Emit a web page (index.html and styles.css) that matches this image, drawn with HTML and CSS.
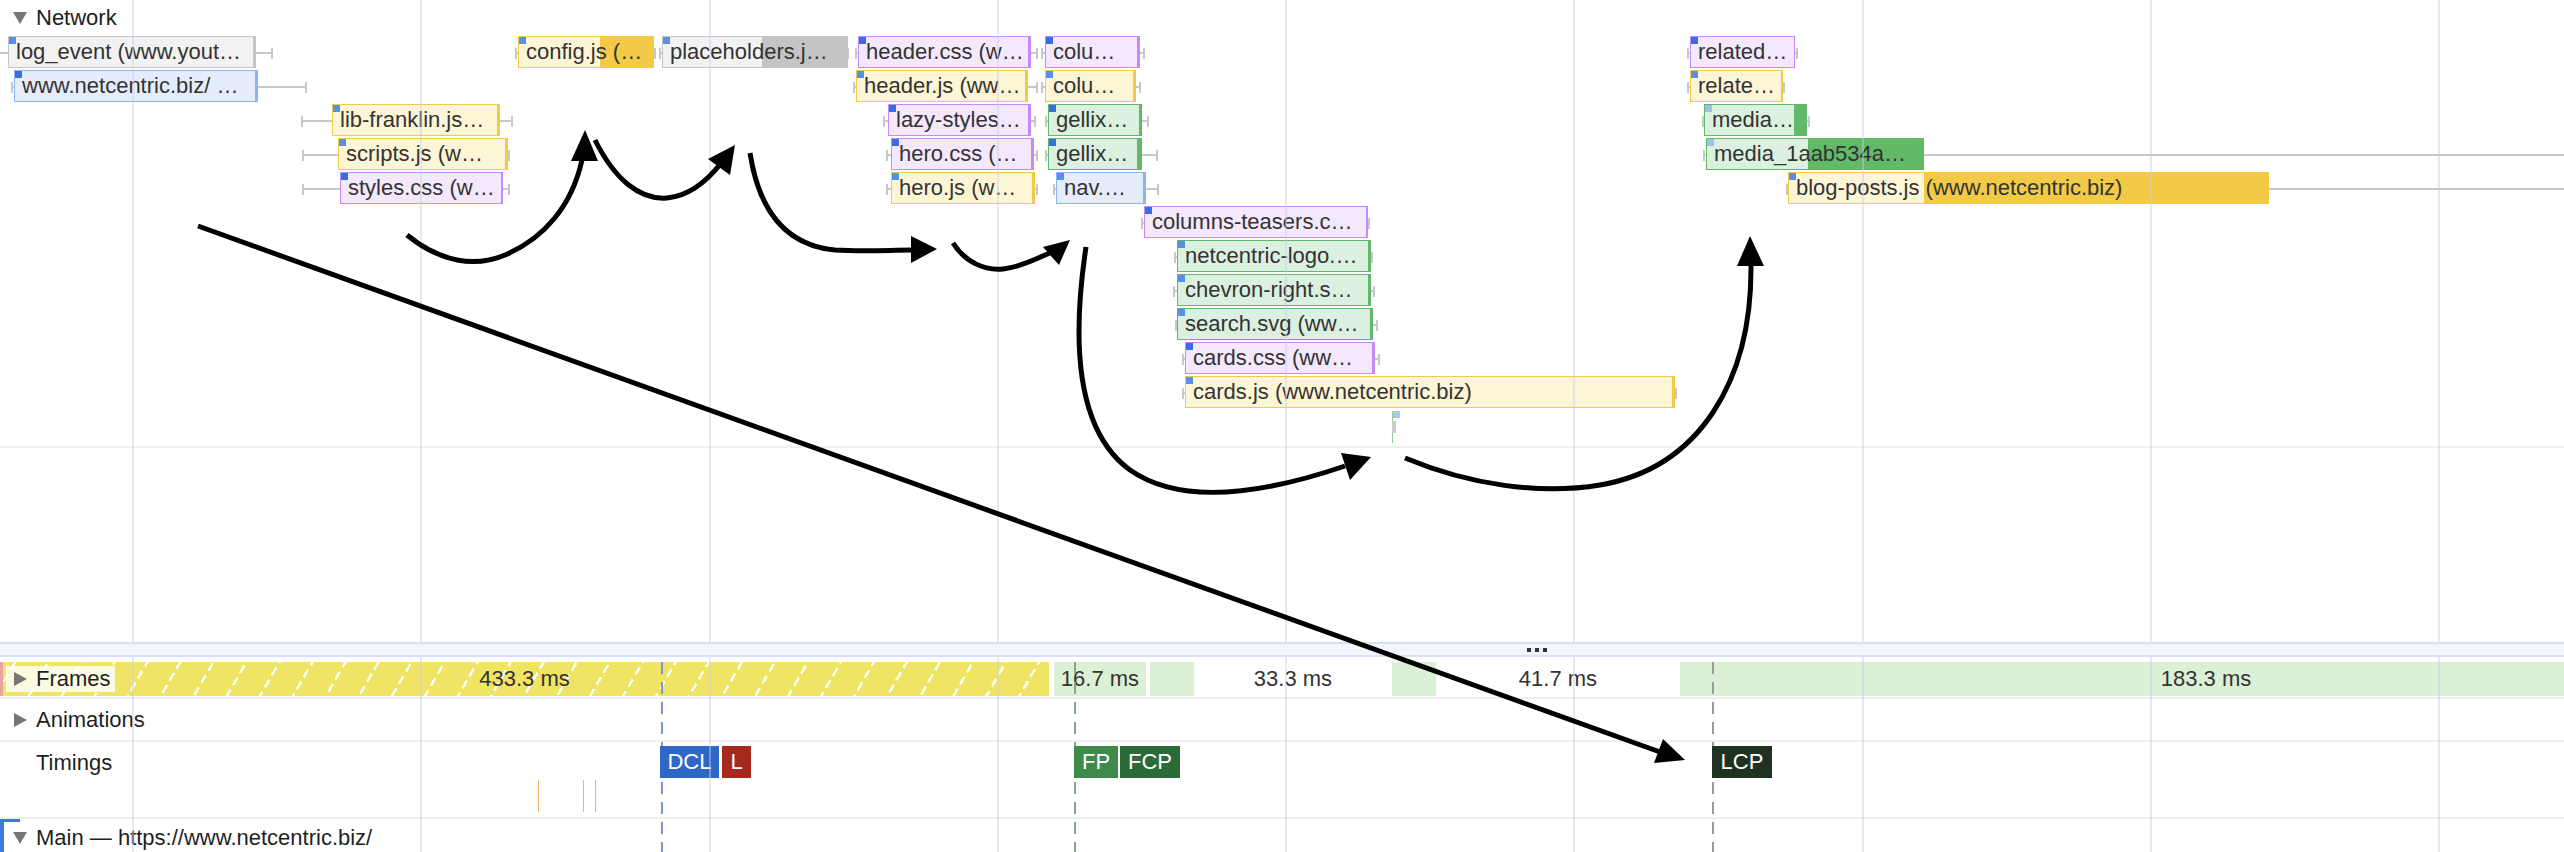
FILE: index.html
```html
<!DOCTYPE html>
<html lang="en">
<head>
<meta charset="utf-8">
<title>Performance – Network</title>
<link rel="stylesheet" href="styles.css">
</head>
<body>
<div class="panel">
  <div class="upper">
    <section class="network">
      <div class="net-header">
        <svg class="tri" width="14" height="12" viewBox="0 0 14 12"><polygon points="0,0 14,0 7,12"/></svg>
        <span>Network</span>
      </div>
      <div class="rows">
        <div class="row">
          <div class="wh nl" style="left:0px;width:273px"></div>
          <div class="bar g pr2" style="left:8px;width:248px;--dl:3px"><span class="t">log_event (www.yout…</span></div>
          <div class="wh" style="left:515px;width:141px"></div>
          <div class="bar y pr2" style="left:518px;width:136px;--dl:54px"><span class="t">config.js (…</span></div>
          <div class="wh" style="left:659px;width:190px"></div>
          <div class="bar g pr2" style="left:662px;width:186px;--dl:86px"><span class="t">placeholders.j…</span></div>
          <div class="wh" style="left:855px;width:183px"></div>
          <div class="bar p pr1" style="left:858px;width:173px;--dl:3px"><span class="t">header.css (w…</span></div>
          <div class="wh" style="left:1041px;width:104px"></div>
          <div class="bar p pr1" style="left:1045px;width:95px;--dl:3px"><span class="t">colu…</span></div>
          <div class="wh" style="left:1687px;width:111px"></div>
          <div class="bar p pr1" style="left:1690px;width:105px;--dl:1px"><span class="t">related…</span></div>
        </div>
        <div class="row">
          <div class="wh" style="left:11px;width:296px"></div>
          <div class="bar b pr1" style="left:14px;width:244px;--dl:3px"><span class="t">www.netcentric.biz/ …</span></div>
          <div class="wh" style="left:853px;width:185px"></div>
          <div class="bar y pr2" style="left:856px;width:172px;--dl:3px"><span class="t">header.js (ww…</span></div>
          <div class="wh" style="left:1041px;width:100px"></div>
          <div class="bar y pr2" style="left:1045px;width:91px;--dl:3px"><span class="t">colu…</span></div>
          <div class="wh" style="left:1687px;width:98px"></div>
          <div class="bar y pr2" style="left:1690px;width:93px;--dl:2px"><span class="t">relate…</span></div>
        </div>
        <div class="row">
          <div class="wh" style="left:301px;width:212px"></div>
          <div class="bar y pr2" style="left:332px;width:168px;--dl:3px"><span class="t">lib-franklin.js…</span></div>
          <div class="wh" style="left:883px;width:153px"></div>
          <div class="bar p pr1" style="left:888px;width:143px;--dl:3px"><span class="t">lazy-styles…</span></div>
          <div class="wh" style="left:1045px;width:104px"></div>
          <div class="bar n pr1" style="left:1048px;width:94px;--dl:3px"><span class="t">gellix…</span></div>
          <div class="wh" style="left:1702px;width:108px"></div>
          <div class="bar n pr3" style="left:1704px;width:103px;--dl:13px"><span class="t">media…</span></div>
        </div>
        <div class="row">
          <div class="wh" style="left:302px;width:208px"></div>
          <div class="bar y pr2" style="left:338px;width:170px;--dl:3px"><span class="t">scripts.js (w…</span></div>
          <div class="wh" style="left:886px;width:152px"></div>
          <div class="bar p pr1" style="left:891px;width:143px;--dl:3px"><span class="t">hero.css (…</span></div>
          <div class="wh" style="left:1045px;width:113px"></div>
          <div class="bar n pr1" style="left:1048px;width:94px;--dl:5px"><span class="t">gellix…</span></div>
          <div class="wh nr" style="left:1703px;width:861px"></div>
          <div class="bar n pr3" style="left:1706px;width:218px;--dl:116px"><span class="t">media_1aab534a…</span></div>
        </div>
        <div class="row">
          <div class="wh" style="left:302px;width:208px"></div>
          <div class="bar p pr1" style="left:340px;width:163px;--dl:2px"><span class="t">styles.css (w…</span></div>
          <div class="wh" style="left:886px;width:152px"></div>
          <div class="bar y pr2" style="left:891px;width:144px;--dl:3px"><span class="t">hero.js (w…</span></div>
          <div class="wh" style="left:1053px;width:106px"></div>
          <div class="bar b pr2" style="left:1056px;width:90px;--dl:3px"><span class="t">nav.…</span></div>
          <div class="wh nr" style="left:1786px;width:778px"></div>
          <div class="bar y pr2" style="left:1788px;width:481px;--dl:345px"><span class="t">blog-posts.js (www.netcentric.biz)</span></div>
        </div>
        <div class="row">
          <div class="wh" style="left:1141px;width:229px"></div>
          <div class="bar p pr1" style="left:1144px;width:224px;--dl:2px"><span class="t">columns-teasers.c…</span></div>
        </div>
        <div class="row">
          <div class="wh" style="left:1174px;width:199px"></div>
          <div class="bar n pr2" style="left:1177px;width:194px;--dl:3px"><span class="t">netcentric-logo.…</span></div>
        </div>
        <div class="row">
          <div class="wh" style="left:1173px;width:202px"></div>
          <div class="bar n pr2" style="left:1177px;width:194px;--dl:3px"><span class="t">chevron-right.s…</span></div>
        </div>
        <div class="row">
          <div class="wh" style="left:1175px;width:203px"></div>
          <div class="bar n pr2" style="left:1177px;width:196px;--dl:3px"><span class="t">search.svg (ww…</span></div>
        </div>
        <div class="row">
          <div class="wh" style="left:1182px;width:198px"></div>
          <div class="bar p pr1" style="left:1185px;width:190px;--dl:3px"><span class="t">cards.css (ww…</span></div>
        </div>
        <div class="row">
          <div class="wh" style="left:1182px;width:495px"></div>
          <div class="bar y pr2" style="left:1185px;width:490px;--dl:3px"><span class="t">cards.js (www.netcentric.biz)</span></div>
        </div>
        <div class="row">
          <div class="tiny-line" style="left:1392px"></div>
          <div class="tiny-sq" style="left:1393px"></div>
          <div class="tiny-bar" style="left:1392px"></div>
        </div>
      </div>
    </section>
    <div class="blank"></div>
  </div>

  <div class="resizer"><span class="dot"></span><span class="dot"></span><span class="dot"></span></div>

  <section class="tracks">
    <div class="track frames">
      <div class="frame-edge"></div>
      <div class="frame partial" style="left:0px;width:1049px">433.3 ms</div>
      <div class="frame ok" style="left:1054px;width:92px">16.7 ms</div>
      <div class="frame ok" style="left:1150px;width:44px"></div>
      <div class="frame idle" style="left:1194px;width:198px">33.3 ms</div>
      <div class="frame ok" style="left:1392px;width:44px"></div>
      <div class="frame idle" style="left:1436px;width:244px">41.7 ms</div>
      <div class="frame ok" style="left:1680px;width:1052px">183.3 ms</div>
      <div class="frames-label">
        <svg class="tri" width="13" height="14" viewBox="0 0 13 14"><polygon points="0,0 13,7 0,14"/></svg>
        <span>Frames</span>
      </div>
    </div>
    <div class="track animations">
      <svg class="tri" width="13" height="14" viewBox="0 0 13 14"><polygon points="0,0 13,7 0,14"/></svg>
      <span>Animations</span>
    </div>
    <div class="track timings">
      <div class="timings-label">Timings</div>
      <div class="tick" style="left:538px"></div>
      <div class="tick" style="left:583px"></div>
      <div class="tick" style="left:595px"></div>
      <div class="marker dcl" style="left:660px;width:59px">DCL</div>
      <div class="marker load" style="left:722px;width:29px">L</div>
      <div class="marker fp" style="left:1074px;width:44px">FP</div>
      <div class="marker fcp" style="left:1120px;width:60px">FCP</div>
      <div class="marker lcp" style="left:1712px;width:60px">LCP</div>
    </div>
    <div class="track main">
      <div class="main-label">
        <svg class="tri" width="14" height="12" viewBox="0 0 14 12"><polygon points="0,0 14,0 7,12"/></svg>
        <span>Main — https://www.netcentric.biz/</span>
      </div>
    </div>
    <div class="vline dcl-line" style="left:661px"></div>
    <div class="vline fp-line" style="left:1074px"></div>
    <div class="vline lcp-line" style="left:1712px"></div>
  </section>

  <svg class="ink" width="2564" height="852" viewBox="0 0 2564 852">
    <g fill="none" stroke="#000" stroke-width="5">
      <path d="M407,235 C440,262 475,268 505,255 C545,238 572,205 582,160"/>
      <path d="M595,140 C615,180 640,200 667,198 C690,196 708,180 722,162"/>
      <path d="M750,153 C758,205 782,245 835,250 C865,252 890,250 912,250"/>
      <path d="M953,243 C965,262 985,271 1003,269 C1022,267 1037,258 1050,253"/>
      <path d="M1086,247 C1072,340 1075,430 1130,470 C1180,505 1260,495 1345,466"/>
      <path d="M1405,458 C1470,485 1540,495 1600,485 C1700,468 1752,380 1751,265"/>
      <path d="M198,226 L1660,752"/>
    </g>
    <g fill="#000">
      <polygon points="585,130 571,161 598,161"/>
      <polygon points="735,145 708,159 730,175"/>
      <polygon points="937,249 911,236 911,263"/>
      <polygon points="1070,240 1043,247 1059,265"/>
      <polygon points="1371,457 1341,453 1350,480"/>
      <polygon points="1750,236 1737,266 1764,266"/>
      <polygon points="1685,760 1654,763 1663,739"/>
    </g>
  </svg>
</div>
</body>
</html>
```

FILE: styles.css
```css
* {
  box-sizing: border-box;
  margin: 0;
  padding: 0;
}

html, body {
  background: #ffffff;
}

body {
  margin: 0;
  font-family: "Liberation Sans", Arial, Helvetica, sans-serif;
  font-size: 22px;
  color: #222222;
}

.panel {
  position: relative;
  width: 2564px;
  height: 852px;
  overflow: hidden;
  display: flex;
  flex-direction: column;
}

/* ---------- grid lines ---------- */
.upper,
.tracks {
  position: relative;
}

.upper::after,
.tracks::after {
  content: "";
  position: absolute;
  inset: 0;
  pointer-events: none;
  z-index: 4;
  background: repeating-linear-gradient(90deg, rgba(196, 206, 240, 0.45) 0 2px, transparent 2px 288.3px) 132px 0;
}

/* ---------- network ---------- */
.upper {
  height: 642px;
  flex: none;
  display: flex;
  flex-direction: column;
}

.network {
  height: 448px;
  flex: none;
  border-bottom: 2px solid #efefef;
  display: flex;
  flex-direction: column;
}

.net-header {
  height: 36px;
  flex: none;
  display: flex;
  align-items: center;
  gap: 9px;
  padding-left: 13px;
  color: #202020;
}

.tri polygon {
  fill: #767676;
}

.rows {
  display: flex;
  flex-direction: column;
}

.row {
  position: relative;
  height: 34px;
  flex: none;
}

.bar {
  position: absolute;
  top: 0;
  height: 32px;
  border: 1px solid;
  padding-left: 7px;
  line-height: 30px;
  white-space: nowrap;
  overflow: hidden;
  color: #333333;
  z-index: 1;
}

.bar::after {
  content: "";
  position: absolute;
  top: -1px;
  bottom: -1px;
  right: -1px;
  width: var(--dl);
}

.bar::before {
  content: "";
  position: absolute;
  left: 0;
  top: 0;
  width: 7px;
  height: 7px;
  z-index: 3;
}

.bar .t {
  position: relative;
  z-index: 2;
}

.bar.g { background: #f2f2f2; border-color: #c6c6c6; }
.bar.g::after { background: #c4c4c4; }
.bar.b { background: #e5edfc; border-color: #8ab4f8; }
.bar.b::after { background: #8ab4f8; }
.bar.y { background: #fdf6d6; border-color: #f2c94c; }
.bar.y::after { background: #f3ca47; }
.bar.p { background: #f4e8fd; border-color: #c58af9; }
.bar.p::after { background: #c58af9; }
.bar.n { background: #dcf0df; border-color: #5fb96b; }
.bar.n::after { background: #62b967; }

.bar.pr1::before { background: #3a6ee0; }
.bar.pr2::before { background: #5b8ee6; }
.bar.pr3::before { background: #9fc0e6; }

.wh {
  position: absolute;
  top: 16px;
  height: 2px;
  background: #c8c8c8;
}

.wh::before,
.wh::after {
  content: "";
  position: absolute;
  top: -4px;
  width: 2px;
  height: 11px;
  background: #c8c8c8;
}

.wh::before { left: 0; }
.wh::after { right: 0; }
.wh.nl::before { display: none; }
.wh.nr::after { display: none; }

.tiny-line {
  position: absolute;
  top: 1px;
  width: 1px;
  height: 32px;
  background: #8fcf94;
}

.tiny-sq {
  position: absolute;
  top: 1px;
  width: 7px;
  height: 7px;
  background: #adc8f0;
}

.tiny-bar {
  position: absolute;
  top: 11px;
  width: 4px;
  height: 12px;
  background: #cccccc;
}

.blank {
  flex: 1;
}

/* ---------- resizer ---------- */
.resizer {
  height: 15px;
  flex: none;
  background: #f3f5fb;
  border-top: 2px solid #d8e2f6;
  border-bottom: 2px solid #d8e2f6;
  display: flex;
  align-items: center;
  gap: 4px;
  padding-left: 1527px;
}

.dot {
  width: 4px;
  height: 4px;
  background: #333333;
}

/* ---------- tracks ---------- */
.tracks {
  flex: 1;
  display: flex;
  flex-direction: column;
}

.track {
  position: relative;
  flex: none;
  border-bottom: 2px solid #eeeeee;
}

.frames {
  height: 42px;
}

.frame {
  position: absolute;
  top: 5px;
  height: 34px;
  display: flex;
  align-items: center;
  justify-content: center;
  white-space: nowrap;
  color: #333333;
}

.frame.partial {
  background-color: #efe463;
  background-image:
    repeating-linear-gradient(30deg, transparent 0 9px, #efe463 9px 14px),
    repeating-linear-gradient(120deg, transparent 0 12px, rgba(255, 255, 255, 0.92) 12px 14.5px, transparent 14.5px 28.6px);
}

.frame.ok {
  background: #dbf0d5;
}

.frame.idle {
  background: transparent;
}

.frame-edge {
  position: absolute;
  left: 0;
  top: 5px;
  width: 3px;
  height: 34px;
  background: #e8a3a0;
  z-index: 1;
}

.frames-label {
  position: absolute;
  left: 6px;
  top: 9px;
  height: 26px;
  width: 109px;
  padding-left: 8px;
  display: flex;
  align-items: center;
  gap: 9px;
  background: rgba(255, 255, 255, 0.8);
  color: #1f1f1f;
  z-index: 2;
}

.animations {
  height: 43px;
  display: flex;
  align-items: center;
  gap: 9px;
  padding-left: 14px;
  color: #1f1f1f;
}

.timings {
  height: 77px;
}

.timings-label {
  height: 42px;
  line-height: 42px;
  padding-left: 36px;
  color: #1f1f1f;
}

.tick {
  position: absolute;
  top: 38px;
  width: 1px;
  height: 32px;
  background: #f2b36e;
}

.marker {
  position: absolute;
  top: 4px;
  height: 32px;
  line-height: 32px;
  text-align: center;
  color: #ffffff;
  z-index: 3;
}

.marker.dcl { background: #2f67c7; }
.marker.load { background: #a6291f; }
.marker.fp { background: #3d8a4b; }
.marker.fcp { background: #2d6a39; }
.marker.lcp { background: #1f3221; }

.main {
  flex: 1;
  border-bottom: none;
}

.main::before {
  content: "";
  position: absolute;
  left: 0;
  top: 0;
  bottom: 0;
  width: 4px;
  background: #3d7ae0;
}

.main::after {
  content: "";
  position: absolute;
  left: 0;
  top: 0;
  width: 20px;
  height: 3px;
  background: #3d7ae0;
}

.main-label {
  height: 38px;
  display: flex;
  align-items: center;
  gap: 9px;
  padding-left: 13px;
  color: #1f1f1f;
}

.vline {
  position: absolute;
  top: 5px;
  bottom: 0;
  width: 2px;
  z-index: 2;
}

.dcl-line {
  background: repeating-linear-gradient(180deg, #8193d2 0 12px, transparent 12px 20px);
}

.fp-line {
  background: repeating-linear-gradient(180deg, #8aa48c 0 12px, transparent 12px 20px);
}

.lcp-line {
  background: repeating-linear-gradient(180deg, #9a9a9a 0 12px, transparent 12px 20px);
}

/* ---------- annotation ink ---------- */
.ink {
  position: absolute;
  left: 0;
  top: 0;
  z-index: 10;
  pointer-events: none;
}
```
